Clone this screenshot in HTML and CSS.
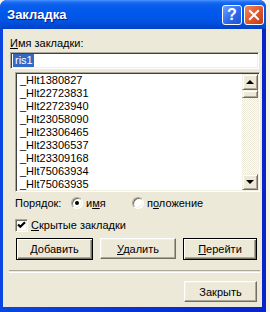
FILE: index.html
```html
<!DOCTYPE html>
<html>
<head>
    <meta charset="UTF-8">
    <title>Закладка</title>
    <link rel="stylesheet" href="styles.css">
</head>
<body>
    <div class="window">
        <div class="titlebar">
            <span class="title">Закладка</span>
            <div class="caption-buttons">
                <span class="cap-btn help">?</span>
                <span class="cap-btn close">
                    <svg width="20" height="20" viewBox="0 0 20 20">
                        <path d="M5.5 5.5 L14.5 14.5 M14.5 5.5 L5.5 14.5" stroke="#fff" stroke-width="2.2" stroke-linecap="square"/>
                    </svg>
                </span>
            </div>
        </div>

        <div class="client">
            <div class="field-label"><u>И</u>мя закладки:</div>
            <div class="textbox"><span class="selected">ris1</span></div>

            <div class="listbox">
                <ul class="items">
                    <li>_Hlt1380827</li>
                    <li>_Hlt22723831</li>
                    <li>_Hlt22723940</li>
                    <li>_Hlt23058090</li>
                    <li>_Hlt23306465</li>
                    <li>_Hlt23306537</li>
                    <li>_Hlt23309168</li>
                    <li>_Hlt75063934</li>
                    <li>_Hlt75063935</li>
                </ul>
                <div class="scrollbar">
                    <div class="sb-btn"><span class="arrow-up"></span></div>
                    <div class="sb-thumb"></div>
                    <div class="sb-track"></div>
                    <div class="sb-btn"><span class="arrow-down"></span></div>
                </div>
            </div>

            <div class="order-row">
                <span class="order-label">Порядок:</span>
                <span class="option first">
                    <span class="radio checked"></span>
                    <span>и<u>м</u>я</span>
                </span>
                <span class="option">
                    <span class="radio"></span>
                    <span>п<u>о</u>ложение</span>
                </span>
            </div>

            <div class="check-row">
                <span class="checkbox">
                    <svg width="9" height="9" viewBox="0 0 9 9">
                        <path d="M1 3.5 L3.3 5.8 L8 1.2" stroke="#000" stroke-width="2.2" fill="none"/>
                    </svg>
                </span>
                <span><u>С</u>крытые закладки</span>
            </div>

            <div class="button-row">
                <button class="btn default add"><u>Д</u>обавить</button>
                <button class="btn remove"><u>У</u>далить</button>
                <button class="btn default goto"><u>П</u>ерейти</button>
            </div>

            <div class="separator"></div>

            <div class="footer">
                <button class="btn close-btn">Закрыть</button>
            </div>
        </div>
    </div>
</body>
</html>
```

FILE: styles.css
```css
body {
    margin: 0;
    background-color: #f4f3ee;
    font-family: "Liberation Sans", Arial, sans-serif;
    font-size: 11px;
    color: #000;
}
u {
    text-decoration: underline;
    text-underline-offset: 1px;
}
.window {
    width: 266px;
    height: 312px;
    box-sizing: border-box;
    display: flex;
    flex-direction: column;
    padding: 0 4px 5px 3px;
    background: linear-gradient(to right, #0a46e0, #0831d9 50%, #0724c7);
    border-radius: 7px 7px 0 0;
}
.titlebar {
    height: 29px;
    margin: 0 -4px 0 -3px;
    display: flex;
    justify-content: space-between;
    align-items: flex-start;
    border-radius: 7px 7px 0 0;
    background: linear-gradient(#4a94ff 0, #1f6df5 2px, #0a5fe8 5px, #0058ee 12px, #0055e5 20px, #0049d2 26px, #0041c8 29px);
}
.title {
    margin: 7px 0 0 7px;
    line-height: 16px;
    font-size: 13px;
    font-weight: bold;
    color: #fff;
    text-shadow: 1px 1px #0a1a8c;
}
.caption-buttons {
    display: flex;
    gap: 2px;
    margin: 5px 2px 0 0;
}
.cap-btn {
    width: 20px;
    height: 20px;
    box-sizing: border-box;
    border: 1px solid #fff;
    border-radius: 3px;
    display: flex;
    align-items: center;
    justify-content: center;
}
.help {
    background: linear-gradient(135deg, #6fa2ff, #2c69ec 55%, #1d55d6);
    color: #fff;
    font-weight: bold;
    font-size: 16px;
    line-height: 18px;
}
.close {
    background: linear-gradient(135deg, #f0895f, #e0542a 55%, #c13b14);
}
.close svg {
    display: block;
}

.client {
    flex: 1;
    background-color: #ece9d8;
    padding-left: 7px;
    display: flex;
    flex-direction: column;
}
.field-label {
    margin-top: 8px;
    line-height: 13px;
}
.textbox {
    margin-top: 2px;
    width: 249px;
    height: 17px;
    box-sizing: border-box;
    padding: 1px 0 0 1px;
    background: #fff;
    border: 1px solid;
    border-color: #aca899 #fff #fff #aca899;
    box-shadow: inset 1px 1px #404040, inset -1px -1px #f1efe2;
    line-height: 13px;
}
.selected {
    display: inline-block;
    padding: 0 1px 0 2px;
    margin-left: 1px;
    background-color: #316ac5;
    color: #fff;
}

.listbox {
    margin: 3px 0 0 5px;
    width: 245px;
    height: 120px;
    box-sizing: border-box;
    display: flex;
    background: #fff;
    border: 1px solid;
    border-color: #aca899 #fff #fff #aca899;
    box-shadow: inset 1px 1px #404040, inset -1px -1px #f1efe2;
    padding: 1px 1px 1px 1px;
}
.items {
    flex: 1;
    list-style: none;
    margin: 0;
    padding: 0 0 0 3px;
    overflow: hidden;
    line-height: 13px;
}
.scrollbar {
    width: 16px;
    display: flex;
    flex-direction: column;
}
.sb-btn, .sb-thumb {
    box-sizing: border-box;
    background-color: #ece9d8;
    border: 1px solid;
    border-color: #f1efe2 #716f64 #716f64 #f1efe2;
    box-shadow: inset 1px 1px #fff, inset -1px -1px #aca899;
}
.sb-btn {
    height: 16px;
    display: flex;
    align-items: center;
    justify-content: center;
}
.sb-thumb {
    height: 8px;
}
.sb-track {
    flex: 1;
    background: repeating-conic-gradient(#fff 0 25%, #ece9d8 0 50%) 0 0 / 2px 2px;
}
.arrow-up, .arrow-down {
    width: 0;
    height: 0;
    border-left: 4px solid transparent;
    border-right: 4px solid transparent;
}
.arrow-up {
    border-bottom: 4px solid #000;
}
.arrow-down {
    border-top: 4px solid #000;
}

.order-row {
    margin: 4px 0 0 5px;
    height: 14px;
    display: flex;
    align-items: center;
}
.order-label {
    width: 56px;
}
.option {
    display: flex;
    align-items: center;
    gap: 3px;
}
.option.first {
    width: 61px;
}
.radio {
    position: relative;
    width: 12px;
    height: 12px;
    box-sizing: border-box;
    border-radius: 50%;
    background: #fff;
    border: 1px solid;
    border-color: #aca899 #fff #fff #aca899;
    box-shadow: inset 1px 1px #716f64, inset -1px -1px #f1efe2;
}
.radio.checked::after {
    content: "";
    position: absolute;
    left: 3px;
    top: 3px;
    width: 4px;
    height: 4px;
    border-radius: 50%;
    background: #000;
}

.check-row {
    margin: 8px 0 0 5px;
    height: 14px;
    display: flex;
    align-items: center;
    gap: 3px;
}
.checkbox {
    width: 13px;
    height: 13px;
    box-sizing: border-box;
    padding: 1px;
    background: #fff;
    border: 1px solid;
    border-color: #aca899 #fff #fff #aca899;
    box-shadow: inset 1px 1px #716f64, inset -1px -1px #f1efe2;
    display: flex;
    align-items: center;
    justify-content: center;
}
.checkbox svg {
    display: block;
}

.button-row {
    margin: 6px 0 0 6px;
    display: flex;
    align-items: flex-start;
}
.btn {
    height: 21px;
    box-sizing: border-box;
    padding: 0;
    font-family: inherit;
    font-size: 11px;
    color: #000;
    background-color: #ece9d8;
    border: 1px solid;
    border-color: #fff #716f64 #716f64 #fff;
    box-shadow: inset -1px -1px #aca899, inset 1px 1px #f1efe2;
}
.btn.default {
    height: 22px;
    border: 1px solid #000;
    box-shadow: inset 1px 1px #fff, inset -1px -1px #716f64, inset -2px -2px #aca899;
}
.add {
    width: 77px;
}
.remove {
    width: 76px;
    margin-left: 7px;
}
.goto {
    width: 74px;
    margin-left: 7px;
}
.separator {
    margin-top: 10px;
    width: 251px;
    margin-left: -1px;
    height: 1px;
    border-top: 1px solid #aca899;
    border-bottom: 1px solid #fff;
}
.footer {
    margin-top: 8px;
    display: flex;
    padding-left: 174px;
}
.close-btn {
    width: 73px;
}
```
